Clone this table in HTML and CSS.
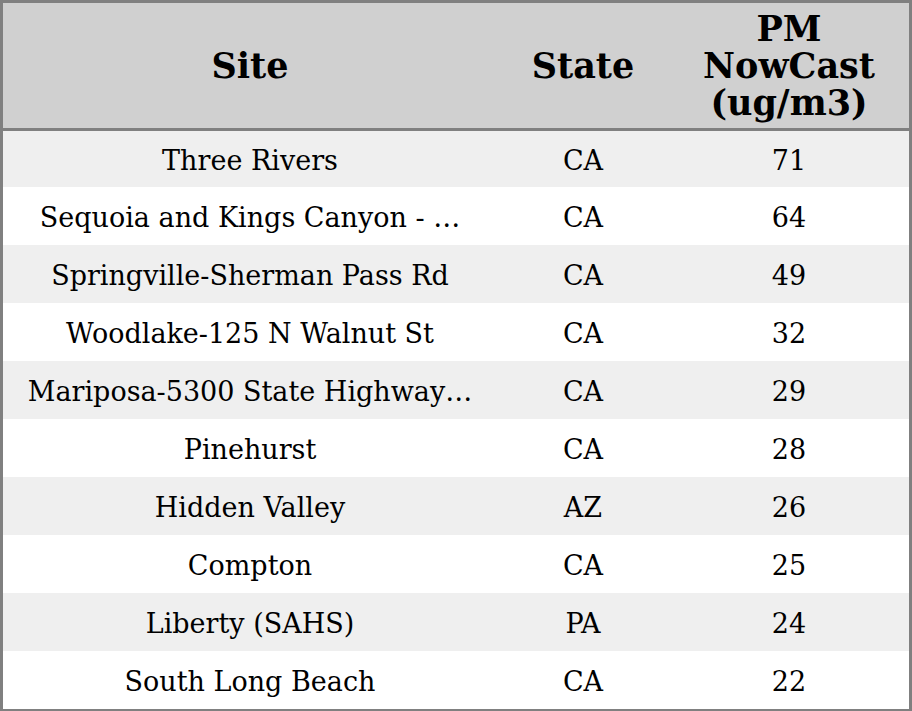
FILE: index.html
```html
<!DOCTYPE html>
<html>
<head>
<meta charset="utf-8">
<link rel="stylesheet" href="styles.css">
</head>
<body>
<table class="aq-table">
  <colgroup>
    <col class="col-site">
    <col class="col-state">
    <col class="col-pm">
  </colgroup>
  <thead>
    <tr>
      <th>Site</th>
      <th>State</th>
      <th>PM<br>NowCast<br>(ug/m3)</th>
    </tr>
  </thead>
  <tbody>
    <tr class="first"><td>Three Rivers</td><td>CA</td><td>71</td></tr>
    <tr><td>Sequoia and Kings Canyon - …</td><td>CA</td><td>64</td></tr>
    <tr><td>Springville-Sherman Pass Rd</td><td>CA</td><td>49</td></tr>
    <tr><td>Woodlake-125 N Walnut St</td><td>CA</td><td>32</td></tr>
    <tr><td>Mariposa-5300 State Highway…</td><td>CA</td><td>29</td></tr>
    <tr><td>Pinehurst</td><td>CA</td><td>28</td></tr>
    <tr><td>Hidden Valley</td><td>AZ</td><td>26</td></tr>
    <tr><td>Compton</td><td>CA</td><td>25</td></tr>
    <tr><td>Liberty (SAHS)</td><td>PA</td><td>24</td></tr>
    <tr><td>South Long Beach</td><td>CA</td><td>22</td></tr>
  </tbody>
</table>
</body>
</html>
```
FILE: styles.css
```css
html, body {
  margin: 0;
  padding: 0;
  background: #ffffff;
}
body {
  font-family: "DejaVu Serif", serif;
  color: #000;
}
.aq-table {
  width: 912px;
  table-layout: fixed;
  border-collapse: separate;
  border-spacing: 0;
  border: 3px solid #808080;
}
.col-site { width: 494px; }
.col-state { width: 172px; }
.col-pm { width: 240px; }
.aq-table th {
  background: #d0d0d0;
  font-size: 35px;
  font-weight: bold;
  line-height: 37px;
  height: 125px;
  padding: 0;
  text-align: center;
  vertical-align: middle;
  border-bottom: 3px solid #808080;
}
.aq-table td {
  font-size: 27px;
  line-height: 32px;
  height: 54px;
  padding: 4px 0 0 0;
  text-align: center;
  vertical-align: middle;
  white-space: nowrap;
  overflow: hidden;
}
.aq-table tr.first td {
  height: 52px;
}
.aq-table tbody tr:nth-child(odd) td {
  background: #efefef;
}
```
